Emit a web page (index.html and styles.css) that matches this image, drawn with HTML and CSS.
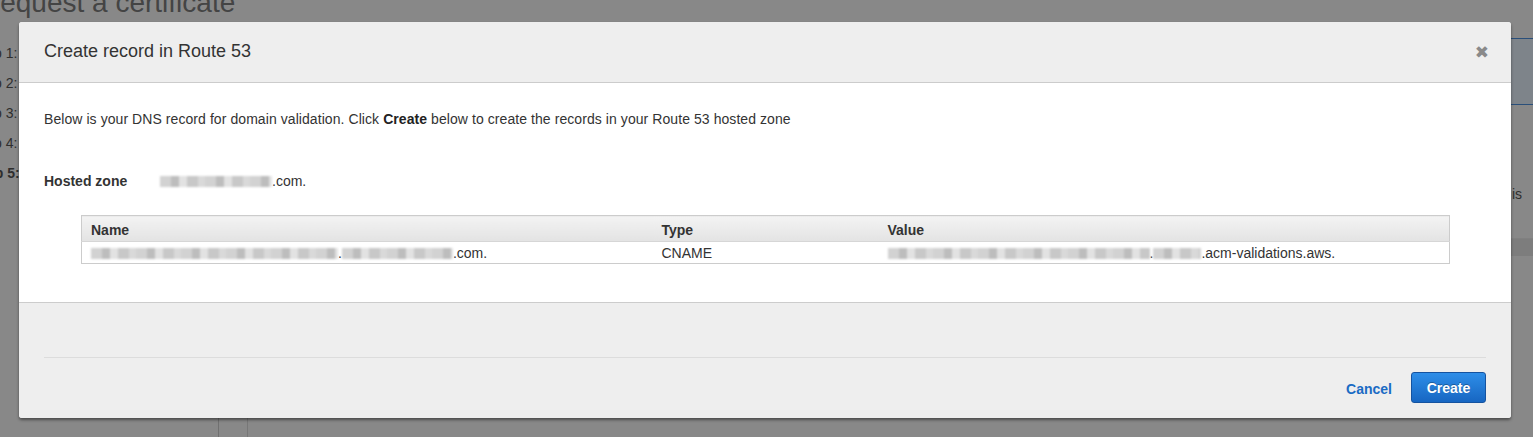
FILE: index.html
```html
<!DOCTYPE html>
<html>
<head>
<meta charset="utf-8">
<link rel="stylesheet" href="styles.css">
</head>
<body>
<div class="page">
  <div class="page-title">Request a certificate</div>
  <div class="page-main">
    <ul class="steps">
      <li>Step 1:</li>
      <li>Step 2:</li>
      <li>Step 3:</li>
      <li>Step 4:</li>
      <li class="cur">Step 5:</li>
    </ul>
    <div class="page-content">
      <div class="right-tab"></div>
      <div class="right-text">is</div>
      <div class="right-band"></div>
    </div>
  </div>
  <div class="page-bottom">
    <div class="vline"></div>
    <div class="vline2"></div>
  </div>
</div>

<div class="modal">
  <div class="modal-header">
    <div class="modal-title">Create record in Route 53</div>
    <div class="close">&#10006;</div>
  </div>
  <div class="modal-body">
    <p class="intro">Below is your DNS record for domain validation. Click <b>Create</b> below to create the records in your Route 53 hosted zone</p>
    <div class="zone">
      <span class="zone-label">Hosted zone</span>
      <span class="zone-val"><span class="blur" style="width:112px"></span>.com.</span>
    </div>
    <table class="records">
      <thead>
        <tr><th class="c-name">Name</th><th class="c-type">Type</th><th class="c-val">Value</th></tr>
      </thead>
      <tbody>
        <tr>
          <td><span class="blur" style="width:247px"></span>.<span class="blur" style="width:111px"></span>.com.</td>
          <td>CNAME</td>
          <td><span class="blur" style="width:262px"></span>.<span class="blur" style="width:48px"></span>.acm-validations.aws.</td>
        </tr>
      </tbody>
    </table>
  </div>
  <div class="modal-footer">
    <div class="footer-line"></div>
    <div class="actions">
      <a class="cancel">Cancel</a>
      <button class="create">Create</button>
    </div>
  </div>
</div>
</body>
</html>
```

FILE: styles.css
```css
* { box-sizing: border-box; }
html, body { margin: 0; padding: 0; }
body {
  background: #888888;
  font-family: "Liberation Sans", Arial, Helvetica, sans-serif;
  color: #333;
  width: 1533px;
  height: 437px;
  overflow: hidden;
  position: relative;
}

/* dimmed background page */
.page { width: 1533px; height: 437px; }
.page-title {
  font-size: 28px;
  line-height: 30px;
  color: #444;
  margin-top: -12px;
  margin-left: -20px;
  height: 30px;
  white-space: nowrap;
}
.page-main { display: flex; height: 400px; }
.steps {
  list-style: none;
  margin: 25px 0 0 -27px;
  padding: 0;
  width: 60px;
  font-size: 14px;
  color: #2e2e2e;
}
.steps li { height: 30px; line-height: 20px; white-space: nowrap; }
.steps li.cur { font-weight: bold; }
.page-content { flex: 1; display: flex; flex-direction: column; align-items: flex-end; }
.right-tab {
  margin-top: 20px;
  width: 30px;
  height: 67px;
  background: #7e848a;
  border-top: 1px solid #2a4f7a;
  border-bottom: 1px solid #2a4f7a;
}
.right-text {
  margin-top: 81px;
  width: 22px;
  font-size: 14px;
  line-height: 16px;
  color: #2e2e2e;
  text-align: right;
  padding-right: 11px;
}
.right-band {
  margin-top: 36px;
  width: 30px;
  height: 18px;
  background: #7d7d7d;
  border-top: 1px solid #808080;
}
.page-bottom { display: flex; height: 30px; }
.vline { margin-left: 218px; width: 1px; background: #707070; }
.vline2 { margin-left: 28px; width: 1px; background: #777; }

/* modal */
.modal {
  position: absolute;
  left: 19px;
  top: 22px;
  width: 1492px;
  height: 396px;
  background: #eeeeee;
  border-radius: 3px;
  box-shadow: 0 2px 3px rgba(0,0,0,0.45);
  display: flex;
  flex-direction: column;
  overflow: hidden;
}
.modal-header {
  height: 61px;
  flex: none;
  background: #eeeeee;
  border-bottom: 1px solid #cccccc;
  display: flex;
  align-items: center;
  justify-content: space-between;
  padding: 0 24px 0 25px;
}
.modal-title {
  font-size: 18px;
  color: #333;
  padding-bottom: 1px;
}
.close {
  font-size: 17px;
  line-height: 17px;
  color: #8a8a8a;
  font-weight: bold;
  font-family: "DejaVu Sans", sans-serif;
  padding-top: 1px;
  margin-right: -2px;
}
.modal-body {
  height: 220px;
  flex: none;
  background: #ffffff;
  padding: 0 25px;
  border-bottom: 1px solid #cccccc;
}
.intro {
  margin: 26px 0 0;
  font-size: 14px;
  line-height: 20px;
  letter-spacing: 0.07px;
  color: #333;
}
.intro b { color: #222; }
.zone {
  margin-top: 42px;
  display: flex;
  font-size: 14px;
  line-height: 20px;
}
.zone-label { font-weight: bold; width: 116px; color: #333; }
.zone-val { color: #333; }
.blur {
  display: inline-block;
  height: 11px;
  vertical-align: -1px;
  background:
    repeating-linear-gradient(90deg, #d2d2d2 0 11px, #bdbdbd 11px 19px, #e2e2e2 19px 27px, #c8c8c8 27px 38px, #d9d9d9 38px 45px);
  filter: blur(1.2px);
}
.records {
  margin: 24px 36px 0 37px;
  width: calc(100% - 73px);
  border-collapse: collapse;
  border: 1px solid #cccccc;
  font-size: 14px;
  color: #333;
}
.records th {
  text-align: left;
  font-weight: bold;
  height: 26px;
  padding: 3px 9px 0;
  background: linear-gradient(#f3f3f3, #e3e3e3);
  border-bottom: 1px solid #d6d6d6;
  color: #333;
}
.records td {
  height: 21px;
  padding: 1px 9px 0;
  line-height: 20px;
}
.c-name { width: 571px; }
.c-type { width: 226px; }

.modal-footer {
  flex: 1;
  background: #eeeeee;
  padding: 0 25px;
  display: flex;
  flex-direction: column;
}
.footer-line {
  margin-top: 54px;
  height: 1px;
  background: #dcdcdc;
}
.actions {
  margin-top: 14px;
  display: flex;
  justify-content: flex-end;
  align-items: center;
}
.cancel {
  color: #1a6bc4;
  font-weight: bold;
  font-size: 14px;
  margin-right: 19px;
  padding-top: 2px;
  cursor: pointer;
}
.create {
  width: 75px;
  height: 31px;
  border: 1px solid #1553a0;
  border-radius: 3px;
  background: linear-gradient(#2e8ee8, #1766c2);
  color: #fff;
  font-weight: bold;
  font-size: 14px;
  font-family: "Liberation Sans", Arial, sans-serif;
  text-shadow: 0 -1px 0 rgba(0,0,0,0.3);
  padding: 1px 0 0;
}
```
